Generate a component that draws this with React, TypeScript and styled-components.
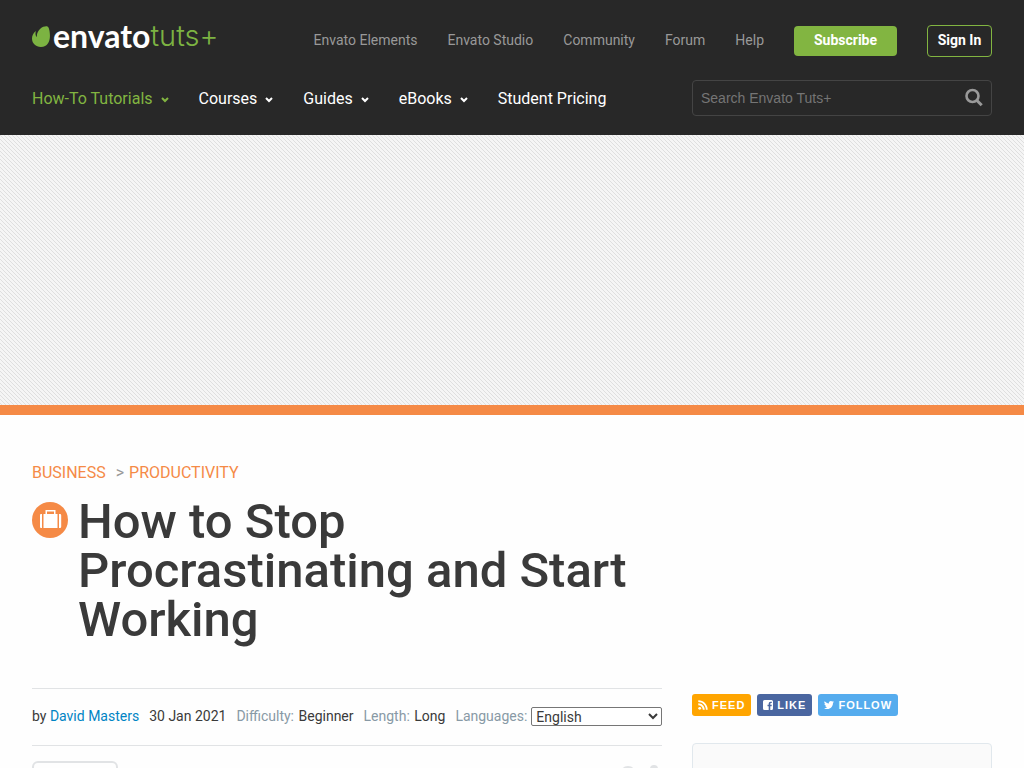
import React from "react";
import styled, { createGlobalStyle } from "styled-components";

const GlobalStyle = createGlobalStyle`
  *, *::before, *::after { box-sizing: border-box; }
  body {
    margin: 0;
    background: #fefefe;
    color: #3a3a3a;
    font: 14px/20px Roboto, "Liberation Sans", sans-serif;
  }
  a { color: inherit; text-decoration: none; }
`;

const Header = styled.header`
  background: #282828;
  padding: 24px 32px 19px;
`;

const HeaderRow = styled.div`
  display: flex;
  align-items: center;
  justify-content: space-between;
`;

const TopRow = styled(HeaderRow)`
  height: 34px;
  margin-bottom: 22px;
`;

const Logo = styled.a`
  display: flex;
  align-items: flex-start;
  height: 34px;
`;

const Leaf = styled.svg`
  width: 18px;
  height: 21px;
  margin: 2px 3px 0 0;
`;

const LogoWord = styled.span<{ $light?: boolean }>`
  font-family: ${(p) => (p.$light ? "Inter" : "Lato")}, sans-serif;
  font-size: ${(p) => (p.$light ? 29 : 32)}px;
  line-height: 24px;
  font-weight: ${(p) => (p.$light ? 300 : 700)};
  color: ${(p) => (p.$light ? "#7cb342" : "#fff")};
`;

const TopNav = styled.nav`
  display: flex;
  align-items: center;
  gap: 30px;
  color: #999;
`;

const TopLink = styled.a`
  padding-bottom: 2px;
`;

const Button = styled.button`
  padding: 0 0 2px;
  border-radius: 4px;
  color: #fff;
  font: 700 14px/20px Roboto, sans-serif;
`;

const Subscribe = styled(Button)`
  width: 103px;
  height: 30px;
  border: 0;
  background: #82b541;
`;

const SignIn = styled(Button)`
  width: 65px;
  height: 32px;
  border: 1px solid #82b541;
  background: transparent;
`;

const MainNav = styled.nav`
  display: flex;
  align-items: center;
  gap: 30px;
  padding-top: 2px;
  font-size: 16px;
`;

const NavLink = styled.a<{ $active?: boolean }>`
  display: flex;
  align-items: center;
  gap: 8px;
  color: ${(p) => (p.$active ? "#82b541" : "#fff")};
`;

const Caret = styled.svg`
  width: 8px;
  height: 6px;
  margin-top: 2px;
  fill: none;
  stroke: currentColor;
  stroke-width: 2;
`;

const Search = styled.form`
  display: flex;
  align-items: center;
  width: 300px;
  height: 36px;
  padding: 0 8px;
  border: 1px solid #444;
  border-radius: 4px;
`;

const SearchInput = styled.input`
  flex: 1;
  min-width: 0;
  padding: 0;
  border: 0;
  outline: 0;
  background: transparent;
  color: #ccc;
  font: 14px/20px "Liberation Sans", Arial, sans-serif;
  &::placeholder { color: #757575; opacity: 1; }
`;

const SearchButton = styled.button`
  display: flex;
  padding: 0 0 2px;
  border: 0;
  background: transparent;
  color: #999;
`;

const Banner = styled.div`
  height: 280px;
  border-bottom: 10px solid #f58a46;
  background: linear-gradient(45deg, #f5f5f5 42%, #dfdfdf 42% 58%, #f5f5f5 58%) 0 0 / 4px 4px;
  background-clip: padding-box;
`;

const Main = styled.main`
  padding: 48px 32px 0;
`;

const Crumbs = styled.nav`
  display: flex;
  font-size: 16px;
  color: #f58a46;
`;

const Separator = styled.span`
  margin: 0 5px 0 10px;
  font-size: 16px;
  color: #999;
`;

const TitleRow = styled.div`
  display: flex;
  gap: 10px;
  margin-top: 14px;
  max-width: 630px;
`;

const Badge = styled.svg`
  flex: none;
  width: 36px;
  height: 36px;
  margin-top: 5px;
`;

const Title = styled.h1`
  margin: 0;
  font-size: 49px;
  line-height: 49px;
  font-weight: 500;
`;

const Columns = styled.div`
  display: grid;
  grid-template-columns: minmax(0, 1fr) 300px;
  gap: 30px;
  margin-top: 44px;
`;

const Meta = styled.div`
  display: flex;
  align-items: center;
  height: 58px;
  padding-bottom: 2px;
  border: solid #e1e3e5;
  border-width: 1px 0;
  white-space: nowrap;
  gap: 10px;
`;

const AuthorLink = styled.a`
  color: #0084c4;
`;

const MetaLabel = styled.span`
  margin-right: 1px;
  color: #8899a5;
`;

const LanguageField = styled.label`
  display: flex;
  align-items: center;
  flex: 1;
  gap: 4px;
  color: #8899a5;
`;

const Select = styled.select`
  flex: 1;
  min-width: 0;
  height: 19px;
  padding: 0;
  border: 1px solid #767676;
  border-radius: 2px;
  background: #fff;
  color: #3a3a3a;
  font: 14px/17px Roboto, sans-serif;
`;

const Actions = styled.div`
  display: flex;
  justify-content: space-between;
  padding-top: 15px;
`;

const ShareBox = styled.div`
  width: 86px;
  height: 40px;
  border: 2px solid #e1e3e5;
  border-radius: 6px;
`;

const ActionIcons = styled.svg`
  width: 42px;
  height: 24px;
  margin-top: 4px;
  fill: #e1e3e5;
`;

const Social = styled.div`
  display: flex;
  gap: 6px;
  margin: 6px 0 27px;
`;

const SocialLink = styled.a<{ $color: string }>`
  display: flex;
  align-items: center;
  gap: 4px;
  height: 22px;
  padding: 0 6px;
  border-radius: 3px;
  background: ${(p) => p.$color};
  color: #fff;
  font: 700 11px/22px "Liberation Sans", Arial, sans-serif;
  letter-spacing: 1px;
`;

const SocialIcon = styled.svg`
  width: 10px;
  height: 10px;
  fill: currentColor;
`;

const Panel = styled.aside`
  height: 250px;
  border: 1px solid #e1e8ed;
  border-radius: 4px;
  background: #fafafa;
`;

const topLinks = ["Envato Elements", "Envato Studio", "Community", "Forum", "Help"];
const mainLinks = [
  { label: "How-To Tutorials", menu: true },
  { label: "Courses", menu: true },
  { label: "Guides", menu: true },
  { label: "eBooks", menu: true },
  { label: "Student Pricing", menu: false },
];

export default function App() {
  return (
    <>
      <GlobalStyle />
      <Header>
        <TopRow>
          <Logo href="#" aria-label="Envato Tuts+">
            <Leaf viewBox="0 0 18 21" aria-hidden="true">
              <path fill="#7cb342" d="M15.500.4C12.800-.7 5 2.200 4.800 10.500c0 .4-.4.5-.6.1C3.400 8.900 3.300 7.300 3.700 5.700c.1-.4-.2-.5-.5-.2C1.200 7.600 0 9.700 0 12.500 0 17.400 3.800 21 8.900 21c6.800 0 8.800-5.600 9-10.200.2-4.600-.8-9.700-2.400-10.400z" />
            </Leaf>
            <LogoWord>envato</LogoWord>
            <LogoWord $light>tuts+</LogoWord>
          </Logo>
          <TopNav aria-label="Envato sites">
            {topLinks.map((label) => (
              <TopLink href="#" key={label}>{label}</TopLink>
            ))}
            <Subscribe type="button">Subscribe</Subscribe>
            <SignIn type="button">Sign In</SignIn>
          </TopNav>
        </TopRow>
        <HeaderRow>
          <MainNav aria-label="Main">
            {mainLinks.map(({ label, menu }, i) => (
              <NavLink href="#" key={label} $active={i === 0}>
                {label}
                {menu && (
                  <Caret viewBox="0 0 8 6" aria-hidden="true">
                    <path d="M1 1l3 3 3-3" />
                  </Caret>
                )}
              </NavLink>
            ))}
          </MainNav>
          <Search role="search">
            <SearchInput type="search" aria-label="Search Envato Tuts+" placeholder="Search Envato Tuts+" />
            <SearchButton type="button" aria-label="Search">
              <svg width="19" height="19" viewBox="0 0 19 19" fill="none" stroke="currentColor" aria-hidden="true">
                <circle cx="8.500" cy="8" r="6" strokeWidth="2.600" />
                <path d="M12.700 12.200l5 5" strokeWidth="3" />
              </svg>
            </SearchButton>
          </Search>
        </HeaderRow>
      </Header>
      <Banner />
      <Main>
        <Crumbs aria-label="Breadcrumb">
          <a href="#">BUSINESS</a>
          <Separator>&gt;</Separator>
          <a href="#">PRODUCTIVITY</a>
        </Crumbs>
        <TitleRow>
          <Badge viewBox="0 0 36 36" aria-hidden="true">
            <circle cx="18" cy="18" r="18" fill="#f58a46" />
            <path fill="#fff" fillRule="evenodd" d="M13.500 12V8h10v4h2v14h-14V12zM15 12h7V9.500h-7zM10 12v14H9q-1 0-1-1V13q0-1 1-1zM27 12v14h1q1.200 0 1.200-1.200V13.200Q29.200 12 28 12z" />
          </Badge>
          <Title>How to Stop Procrastinating and Start Working</Title>
        </TitleRow>
        <Columns>
          <div>
            <Meta>
              <span>by <AuthorLink href="#">David Masters</AuthorLink></span>
              <time dateTime="2021-01-30">30 Jan 2021</time>
              <span><MetaLabel>Difficulty:</MetaLabel> Beginner</span>
              <span><MetaLabel>Length:</MetaLabel> Long</span>
              <LanguageField>
                Languages:
                <Select defaultValue="English">
                  <option>English</option>
                </Select>
              </LanguageField>
            </Meta>
            <Actions>
              <ShareBox />
              <ActionIcons viewBox="0 0 42 24" aria-hidden="true">
                <ellipse cx="8" cy="9" rx="8" ry="8" />
                <circle cx="34" cy="4" r="4" />
              </ActionIcons>
            </Actions>
          </div>
          <div>
            <Social>
              <SocialLink href="#" $color="#ffa500">
                <SocialIcon viewBox="0 0 10 10" aria-hidden="true">
                  <circle cx="1.700" cy="8.300" r="1.400" />
                  <path d="M.3 3.300v1.900c2.500 0 4.500 2 4.500 4.500h1.900C6.700 6.200 3.800 3.300.3 3.300zM.3.300v1.800c4.200 0 7.600 3.400 7.600 7.600h1.800C9.700 4.500 5.500.3.3.3z" />
                </SocialIcon>
                FEED
              </SocialLink>
              <SocialLink href="#" $color="#4a66a0">
                <SocialIcon viewBox="0 0 10 10" aria-hidden="true">
                  <path d="M1.500 0h7Q10 0 10 1.500v7Q10 10 8.500 10H7.300V6.200h1.300l.2-1.500H7.300v-.9c0-.5.2-.7.700-.7h.8V1.700H7.700c-1.300 0-2 .8-2 2v1H4.500v1.500h1.200V10H1.500Q0 10 0 8.500v-7Q0 0 1.500 0z" />
                </SocialIcon>
                LIKE
              </SocialLink>
              <SocialLink href="#" $color="#55acee">
                <SocialIcon viewBox="0 2 24 20" aria-hidden="true">
                  <path d="M23.950 4.570a10 10 0 0 1-2.820.77 4.960 4.960 0 0 0 2.160-2.720c-.95.550-2 .950-3.130 1.180a4.920 4.920 0 0 0-8.380 4.480C7.690 8.090 4.070 6.130 1.640 3.160a4.930 4.930 0 0 0 1.520 6.570 4.900 4.900 0 0 1-2.230-.61v.060a4.920 4.920 0 0 0 3.950 4.830 5 5 0 0 1-2.210.08 4.940 4.940 0 0 0 4.600 3.420A9.870 9.870 0 0 1 0 19.540a14 14 0 0 0 7.550 2.210c9.050 0 14-7.500 14-13.990 0-.210 0-.420-.02-.630a9.940 9.940 0 0 0 2.460-2.550z" />
                </SocialIcon>
                FOLLOW
              </SocialLink>
            </Social>
            <Panel />
          </div>
        </Columns>
      </Main>
    </>
  );
}
